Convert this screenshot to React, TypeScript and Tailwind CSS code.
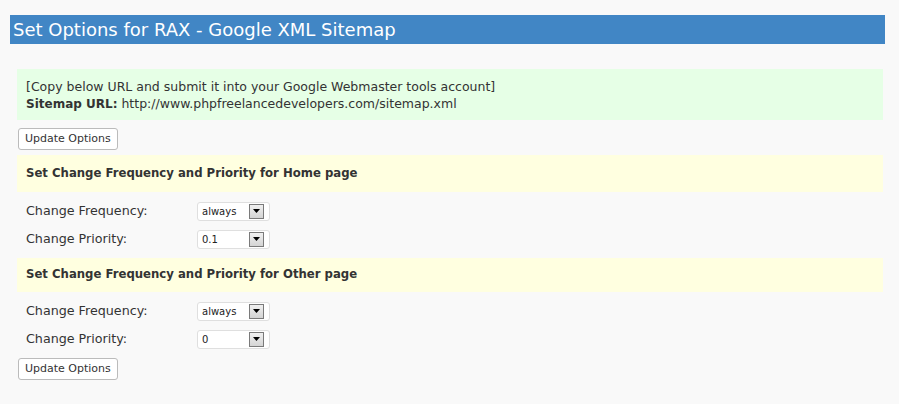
import React from "react";

const font = { fontFamily: '"DejaVu Sans", Verdana, sans-serif' };

function Select({ value }: { value: string }) {
  return (
    <div className="flex h-[19px] w-[73px] items-center justify-between rounded-[3px] border border-[#dfdfdf] bg-white pl-[4px] pr-[5px]">
      <span className="text-[10px] text-[#222]">{value}</span>
      <span className="flex h-[15px] w-[15px] items-center justify-center border border-[#7a7a7a] bg-gradient-to-b from-[#f0f0f0] to-[#d4d4d4]">
        <svg width="7" height="4" viewBox="0 0 7 4">
          <path d="M0 0h7L3.5 4z" fill="#000" />
        </svg>
      </span>
    </div>
  );
}

function Row({ label, value }: { label: string; value: string }) {
  return (
    <div className="flex h-[28px] items-center pl-[9px]">
      <span className="w-[171px] text-[12.7px] text-[#333]">{label}</span>
      <Select value={value} />
    </div>
  );
}

function Button() {
  return (
    <button className="h-[22px] rounded-[3px] border border-[#bbb] bg-white px-[6px] text-[11px] text-[#333]">
      Update Options
    </button>
  );
}

export default function App() {
  return (
    <div className="h-[404px] w-[899px] bg-[#f9f9f9] pt-[15px]" style={font}>
      <div className="mx-[10px] flex h-[29px] w-[875px] items-center bg-[#4186c5] pl-[3px] text-[18px] text-white">
        Set Options for RAX - Google XML Sitemap
      </div>
      <div className="ml-[17px] w-[866px]">
        <div className="mt-[25px] h-[51px] bg-[#e6ffe6] px-[9px] pt-[9px] text-[12.5px] leading-[17px] text-[#333]">
          <div>[Copy below URL and submit it into your Google Webmaster tools account]</div>
          <div>
            <b className="text-[12px]">Sitemap URL:</b> http://www.phpfreelancedevelopers.com/sitemap.xml
          </div>
        </div>
        <div className="mt-[8px] flex pl-[1px]">
          <Button />
        </div>
        <div className="mt-[5px] flex h-[37px] items-center bg-[#ffffe0] pl-[9px] text-[11.7px] font-bold text-[#333]">
          Set Change Frequency and Priority for Home page
        </div>
        <div className="pt-[5px]">
          <Row label="Change Frequency:" value="always" />
          <Row label="Change Priority:" value="0.1" />
        </div>
        <div className="mt-[5px] flex h-[34px] items-center bg-[#ffffe0] pl-[9px] text-[11.7px] font-bold text-[#333]">
          Set Change Frequency and Priority for Other page
        </div>
        <div className="pt-[5px]">
          <Row label="Change Frequency:" value="always" />
          <Row label="Change Priority:" value="0" />
        </div>
        <div className="mt-[5px] flex pl-[1px]">
          <Button />
        </div>
      </div>
    </div>
  );
}
